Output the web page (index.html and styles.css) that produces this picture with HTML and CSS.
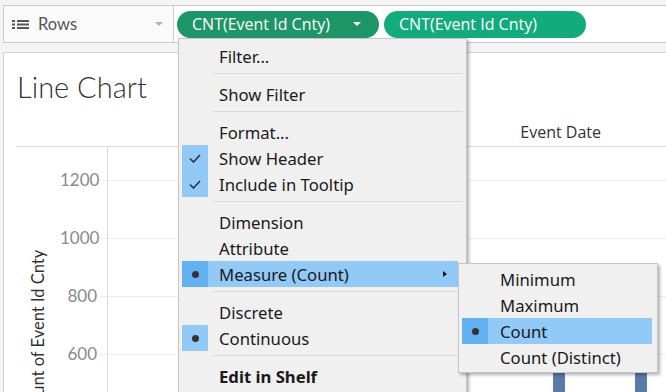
FILE: index.html
```html
<!DOCTYPE html>
<html lang="en">
<head>
  <meta charset="UTF-8" />
  <title>Line Chart</title>
  <link rel="stylesheet" href="styles.css">
</head>
<body>
  <!-- Rows shelf -->
  <div class="shelf">
    <div class="shelf-label">
      <svg class="list-icon" width="17" height="9" viewBox="0 0 17 9">
        <rect x="0" y="0" width="3" height="2" />
        <rect x="5" y="0" width="12" height="2" />
        <rect x="0" y="3.5" width="3" height="2" />
        <rect x="5" y="3.5" width="12" height="2" />
        <rect x="0" y="7" width="3" height="2" />
        <rect x="5" y="7" width="12" height="2" />
      </svg>
      <span>Rows</span>
      <span class="caret"></span>
    </div>
    <div class="shelf-pills">
      <div class="pill pill-open">CNT(Event Id Cnty)<span class="caret caret-white"></span></div>
      <div class="pill">CNT(Event Id Cnty)</div>
    </div>
  </div>

  <!-- Worksheet -->
  <div class="sheet">
    <div class="sheet-head">
      <h1 class="sheet-title">Line Chart</h1>
      <div class="col-header">Event Date</div>
    </div>
    <div class="sheet-body">
      <div class="axis-title">Count of Event Id Cnty</div>
      <div class="ticks">
        <div class="tick"><span>1200</span></div>
        <div class="tick"><span>1000</span></div>
        <div class="tick"><span>800</span></div>
        <div class="tick"><span>600</span></div>
      </div>
      <div class="plot">
        <div class="gridline"></div>
        <div class="gridline"></div>
        <div class="gridline"></div>
        <div class="gridline"></div>
        <div class="bar" style="left: 445px;"></div>
        <div class="bar" style="left: 527px;"></div>
      </div>
    </div>
  </div>

  <!-- Pill context menu -->
  <div class="menu">
    <div class="mi"><span class="mi-icon"></span><span class="mi-label">Filter...</span></div>
    <div class="sep"></div>
    <div class="mi"><span class="mi-icon"></span><span class="mi-label">Show Filter</span></div>
    <div class="sep"></div>
    <div class="mi"><span class="mi-icon"></span><span class="mi-label">Format...</span></div>
    <div class="mi"><span class="mi-icon on">
      <svg width="12" height="9" viewBox="0 0 12 9"><polyline points="1,4.5 4.5,8 11,1" /></svg>
    </span><span class="mi-label">Show Header</span></div>
    <div class="mi"><span class="mi-icon on">
      <svg width="12" height="9" viewBox="0 0 12 9"><polyline points="1,4.5 4.5,8 11,1" /></svg>
    </span><span class="mi-label">Include in Tooltip</span></div>
    <div class="sep"></div>
    <div class="mi"><span class="mi-icon"></span><span class="mi-label">Dimension</span></div>
    <div class="mi"><span class="mi-icon"></span><span class="mi-label">Attribute</span></div>
    <div class="mi hot"><span class="mi-icon"><span class="dot"></span></span><span class="mi-label">Measure (Count)</span><span class="arrow"></span></div>
    <div class="sep"></div>
    <div class="mi"><span class="mi-icon"></span><span class="mi-label">Discrete</span></div>
    <div class="mi"><span class="mi-icon on"><span class="dot"></span></span><span class="mi-label">Continuous</span></div>
    <div class="sep"></div>
    <div class="mi"><span class="mi-icon"></span><span class="mi-label bold">Edit in Shelf</span></div>
  </div>

  <!-- Measure submenu -->
  <div class="menu submenu">
    <div class="mi"><span class="mi-icon"></span><span class="mi-label">Minimum</span></div>
    <div class="mi"><span class="mi-icon"></span><span class="mi-label">Maximum</span></div>
    <div class="mi hot"><span class="mi-icon"><span class="dot"></span></span><span class="mi-label">Count</span></div>
    <div class="mi"><span class="mi-icon"></span><span class="mi-label">Count (Distinct)</span></div>
  </div>
</body>
</html>
```

FILE: styles.css
```css
html, body {
  margin: 0;
  padding: 0;
  overflow: hidden;
}
body {
  background: #f4f4f4;
  font-family: Lato, "Noto Sans", sans-serif;
  color: #333;
  height: 392px;
  position: relative;
}

/* Shelf */
.shelf {
  display: flex;
  height: 38px;
  box-sizing: border-box;
  margin: 5px 0 0 3px;
  border: 1px solid #c9c9c9;
  border-right: none;
  background: #fff;
}
.shelf-label {
  width: 170px;
  display: flex;
  align-items: center;
  padding-left: 8px;
  box-sizing: border-box;
  border-right: 1px solid #cdcdcd;
  background: #fafafa;
  font-size: 16.5px;
  color: #555;
}
.list-icon {
  fill: #555;
  margin-right: 9px;
}
.caret {
  width: 0;
  height: 0;
  border-left: 4px solid transparent;
  border-right: 4px solid transparent;
  border-top: 4px solid #b3b3b3;
  margin-left: auto;
  margin-right: 10px;
}
.shelf-pills {
  display: flex;
  align-items: center;
  gap: 5px;
  padding-left: 3px;
}
.pill {
  width: 202px;
  height: 27px;
  box-sizing: border-box;
  border-radius: 14px;
  background: #12ab7b;
  color: #fff;
  font-family: "Open Sans", Lato, sans-serif;
  font-size: 16px;
  display: flex;
  align-items: center;
  padding-left: 15px;
}
.pill-open {
  background: #1d9567;
}
.caret-white {
  border-top-color: #fff;
  margin-right: 18px;
}

/* Worksheet */
.sheet {
  margin: 9px 0 0 3px;
  background: #fff;
  border: 1px solid #d4d4d4;
  border-right: none;
  height: 400px;
}
.sheet-head {
  display: flex;
  height: 93px;
  margin-left: 12px;
  border-bottom: 1px solid #d9d9d9;
}
.sheet-title {
  margin: 0;
  padding: 17px 0 0 1px;
  font-size: 29px;
  font-weight: 300;
  line-height: 34px;
  color: #333;
  white-space: nowrap;
}
.col-header {
  align-self: flex-end;
  margin-left: auto;
  margin-right: 65px;
  padding-bottom: 3px;
  font-family: "Open Sans", Lato, sans-serif;
  font-size: 16px;
  color: #333;
}
.sheet-body {
  display: flex;
  margin-left: 12px;
  height: 300px;
}
.axis-title {
  width: 44px;
  writing-mode: vertical-rl;
  transform: rotate(180deg);
  text-align: end;
  padding-bottom: 103px;
  box-sizing: border-box;
  line-height: 44px;
  font-size: 16.5px;
  color: #333;
  white-space: nowrap;
}
.ticks {
  width: 47px;
  padding-top: 33px;
}
.tick {
  display: flow-root;
  height: 58px;
  text-align: right;
  padding-right: 10px;
  font-size: 17px;
  color: #8a8a8a;
}
.tick span {
  display: block;
  line-height: 20px;
  margin-top: -10px;
}
.plot {
  flex: 1;
  position: relative;
  border-left: 1px solid #d9d9d9;
  padding-top: 33px;
}
.gridline {
  height: 58px;
  box-sizing: border-box;
  border-top: 1px solid #ededed;
  margin-left: -8px;
}
.bar {
  position: absolute;
  top: 226px;
  width: 12px;
  height: 100px;
  background: #5a7ba7;
}

/* Context menus */
.menu {
  position: absolute;
  left: 178px;
  top: 38px;
  width: 289px;
  box-sizing: border-box;
  padding: 4px 0 40px;
  background: #f0f0f0;
  border: 1px solid #c6c6c6;
  box-shadow: 2px 2px 3px rgba(0, 0, 0, 0.3);
  font-family: "Noto Sans", "Open Sans", sans-serif;
  font-size: 16.7px;
  color: #1a1a1a;
}
.mi {
  display: flex;
  align-items: center;
  height: 26px;
  margin: 0 8px 0 3px;
}
.mi-icon {
  width: 26px;
  height: 26px;
  display: flex;
  align-items: center;
  justify-content: center;
  flex-shrink: 0;
}
.mi-icon svg polyline {
  fill: none;
  stroke: #333;
  stroke-width: 1.6;
}
.mi-icon.on {
  background: #91c9f7;
}
.mi-label {
  margin-left: 11px;
  white-space: nowrap;
}
.mi-label.bold {
  font-weight: bold;
}
.dot {
  width: 7px;
  height: 7px;
  border-radius: 50%;
  background: #333;
}
.mi.hot {
  background: #91c9f7;
}
.mi.hot .mi-icon {
  background: #62b1f1;
}
.arrow {
  width: 0;
  height: 0;
  border-top: 3.5px solid transparent;
  border-bottom: 3.5px solid transparent;
  border-left: 4px solid #111;
  margin-left: auto;
  margin-right: 11px;
}
.sep {
  height: 1px;
  background: #d9d9d9;
  margin: 4px 3px 7px 34px;
}
.submenu {
  left: 458px;
  top: 263px;
  width: 200px;
  padding: 2px 0 2px;
}
.submenu .mi {
  margin: 0 5px 0 3px;
}
.submenu .mi-label {
  margin-left: 12px;
}
```
